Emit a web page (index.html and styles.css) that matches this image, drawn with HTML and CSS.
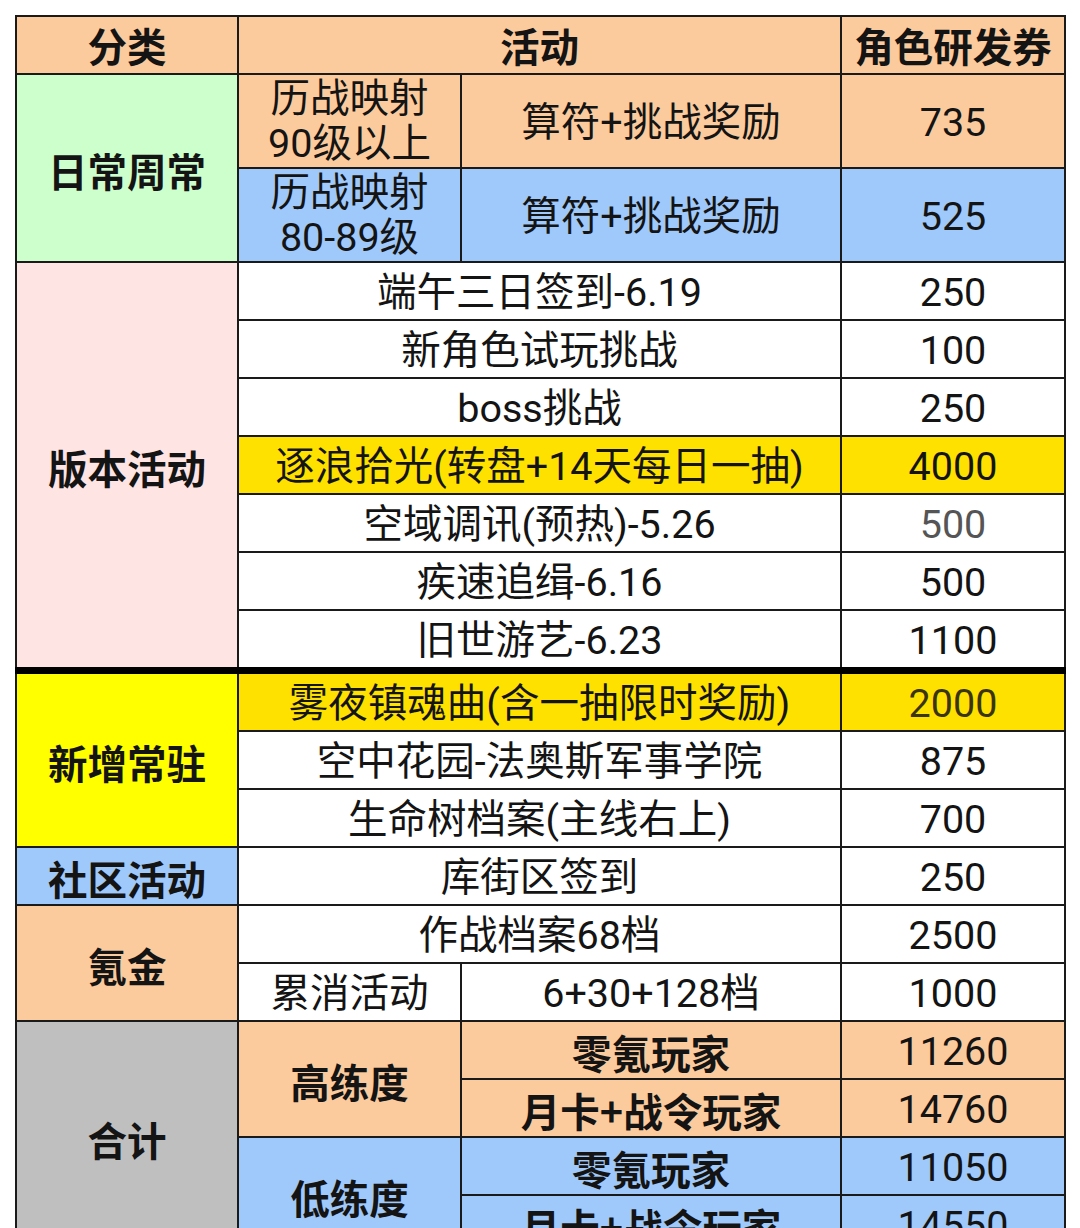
FILE: index.html
```html
<!DOCTYPE html>
<html lang="zh-CN">
<head>
<meta charset="utf-8">
<title>角色研发券统计</title>
<link rel="stylesheet" href="styles.css">
</head>
<body>
<table class="sheet">
  <colgroup>
    <col class="c1"><col class="c2"><col class="c3"><col class="c4">
  </colgroup>
  <tr class="r-head">
    <th class="peach">分类</th>
    <th class="peach" colspan="2">活动</th>
    <th class="peach">角色研发券</th>
  </tr>
  <tr class="r-tall">
    <td class="cat green" rowspan="2">日常周常</td>
    <td class="peach two">历战映射<br>90级以上</td>
    <td class="peach">算符+挑战奖励</td>
    <td class="peach">735</td>
  </tr>
  <tr class="r-tall">
    <td class="blue two">历战映射<br>80-89级</td>
    <td class="blue">算符+挑战奖励</td>
    <td class="blue">525</td>
  </tr>
  <tr>
    <td class="cat pink thick" rowspan="7">版本活动</td>
    <td colspan="2">端午三日签到-6.19</td>
    <td>250</td>
  </tr>
  <tr><td colspan="2">新角色试玩挑战</td><td>100</td></tr>
  <tr><td colspan="2">boss挑战</td><td>250</td></tr>
  <tr><td colspan="2" class="gold">逐浪拾光(转盘+14天每日一抽)</td><td class="gold">4000</td></tr>
  <tr><td colspan="2">空域调讯(预热)-5.26</td><td class="muted">500</td></tr>
  <tr><td colspan="2">疾速追缉-6.16</td><td>500</td></tr>
  <tr class="r-thick"><td colspan="2" class="thick">旧世游艺-6.23</td><td class="thick">1100</td></tr>
  <tr>
    <td class="cat yellow" rowspan="3">新增常驻</td>
    <td colspan="2" class="gold">雾夜镇魂曲(含一抽限时奖励)</td>
    <td class="gold olive">2000</td>
  </tr>
  <tr><td colspan="2">空中花园-法奥斯军事学院</td><td>875</td></tr>
  <tr><td colspan="2">生命树档案(主线右上)</td><td>700</td></tr>
  <tr>
    <td class="cat blue">社区活动</td>
    <td colspan="2">库街区签到</td>
    <td>250</td>
  </tr>
  <tr>
    <td class="cat peach" rowspan="2">氪金</td>
    <td colspan="2">作战档案68档</td>
    <td>2500</td>
  </tr>
  <tr><td>累消活动</td><td>6+30+128档</td><td>1000</td></tr>
  <tr>
    <td class="cat gray" rowspan="4">合计</td>
    <td class="peach b" rowspan="2">高练度</td>
    <td class="peach b">零氪玩家</td>
    <td class="peach">11260</td>
  </tr>
  <tr><td class="peach b">月卡+战令玩家</td><td class="peach">14760</td></tr>
  <tr>
    <td class="blue b" rowspan="2">低练度</td>
    <td class="blue b">零氪玩家</td>
    <td class="blue">11050</td>
  </tr>
  <tr><td class="blue b">月卡+战令玩家</td><td class="blue">14550</td></tr>
</table>
</body>
</html>
```

FILE: styles.css
```css
html, body {
  margin: 0;
  padding: 0;
  background: #ffffff;
}
body {
  padding: 15px 0 0 15px;
  font-family: Roboto, "Noto Sans CJK SC", sans-serif;
  color: #141414;
}
.sheet {
  border-collapse: collapse;
  table-layout: fixed;
  width: 1049px;
}
.c1 { width: 222px; }
.c2 { width: 223px; }
.c3 { width: 380px; }
.c4 { width: 224px; }

.sheet th, .sheet td {
  border: 2px solid #1a1a1a;
  padding: 0;
  text-align: center;
  vertical-align: middle;
  font-size: 39.5px;
  font-weight: 400;
  line-height: 54px;
  height: 56px;
  white-space: nowrap;
  overflow: hidden;
}
.sheet td {
  padding-top: 4px;
  line-height: 50px;
  height: 52px;
}
.sheet th {
  font-weight: 700;
  font-family: "Noto Sans CJK SC", sans-serif;
}
.sheet .r-tall td { height: 88px; }
.sheet td.two {
  padding-top: 0;
  line-height: 45px;
  height: 92px;
}
.sheet td.thick { border-bottom: 7px solid #000; }
.cat, .b {
  font-weight: 700 !important;
  font-family: "Noto Sans CJK SC", sans-serif;
}

.peach { background: #fccb9d; }
.green { background: #ccffcc; }
.pink { background: #ffe4e4; }
.blue { background: #9fc9fa; }
.yellow { background: #ffff00; }
.gold { background: #ffe100; }
.gray { background: #bfbfbf; }
.muted { color: #555555; }
.olive { color: #3a3510; }
```
